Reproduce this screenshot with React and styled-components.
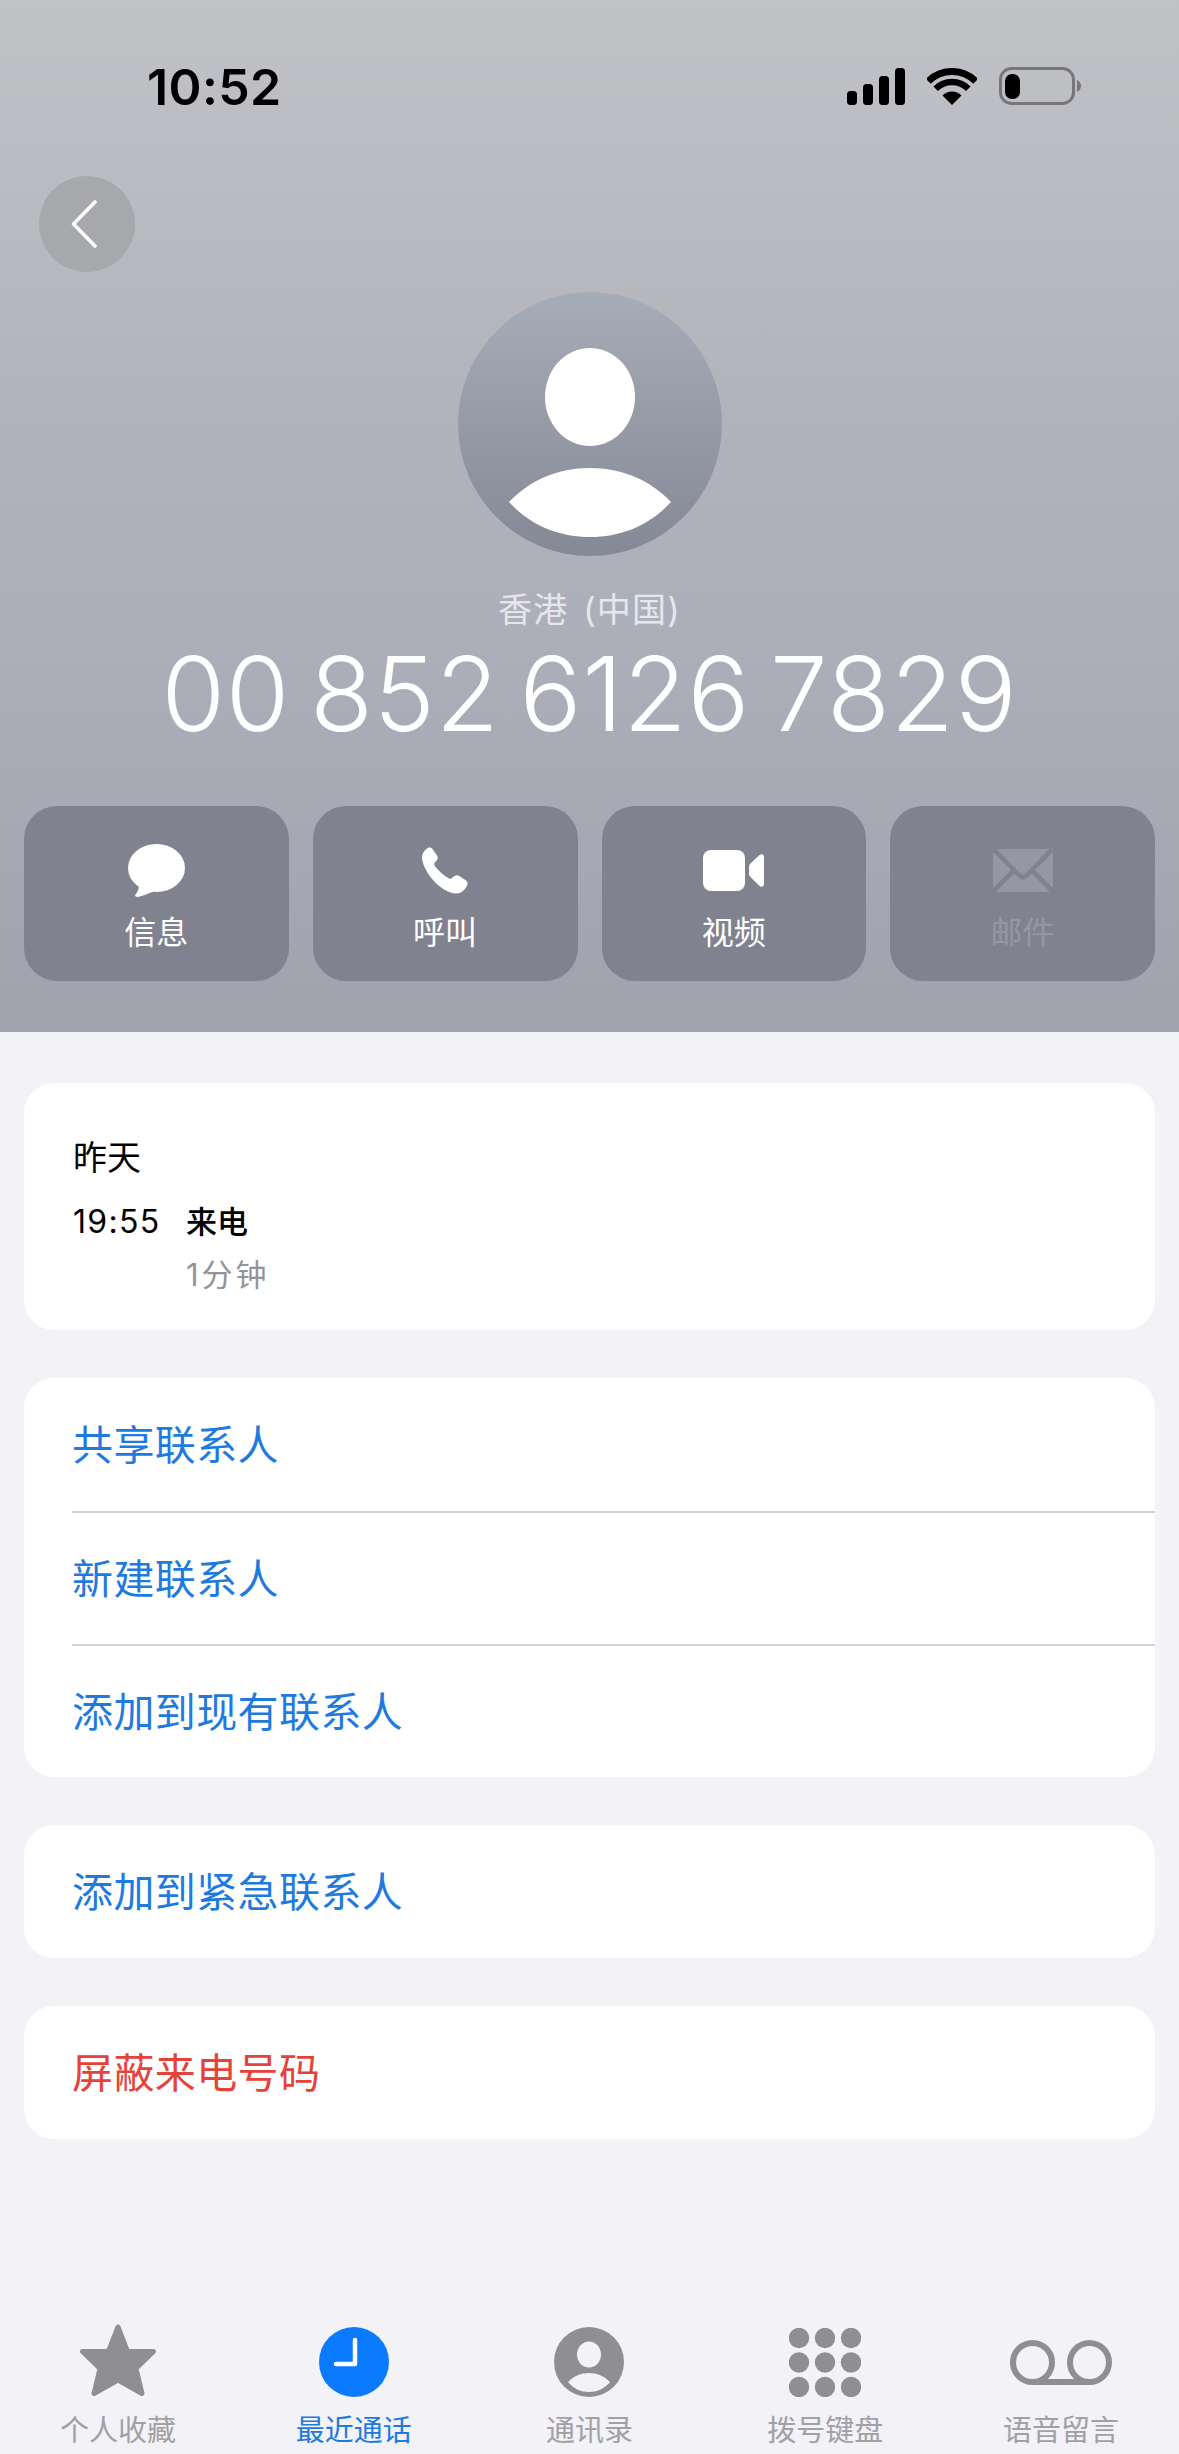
import React from "react";
import styled, { createGlobalStyle } from "styled-components";

const GlobalStyle = createGlobalStyle`
  html, body {
    margin: 0;
    padding: 0;
    background: #f2f2f7;
  }
  body {
    font-family: "Inter", "Noto Sans CJK SC", sans-serif;
    overflow: hidden;
  }
  * {
    box-sizing: border-box;
  }
`;

const CJK = `"Inter", "Noto Sans CJK SC", sans-serif`;

const Page = styled.div`
  width: 1179px;
  height: 2454px;
  display: flex;
  flex-direction: column;
  background: #f2f2f7;
  font-family: ${CJK};
`;

const Header = styled.header`
  height: 1032px;
  flex: none;
  display: flex;
  flex-direction: column;
  background: linear-gradient(
    180deg,
    #c1c2c6 0%,
    #b7b8be 28%,
    #b0b3bb 41.5%,
    #acafb9 62%,
    #a0a2ae 100%
  );
`;

const StatusBar = styled.div`
  display: flex;
  justify-content: space-between;
  align-items: center;
  height: 38px;
  margin-top: 67px;
  padding: 0 98px 0 147px;
`;

const Clock = styled.span`
  padding-top: 2px;
  font-size: 50px;
  font-weight: 600;
  line-height: 38px;
  letter-spacing: 0.4px;
  color: #000;
`;

const StatusIcons = styled.div`
  display: flex;
  align-items: center;
  gap: 22px;
`;

const BackButton = styled.div`
  width: 96px;
  height: 96px;
  margin: 71px 0 0 39px;
  padding-right: 6px;
  border-radius: 50%;
  display: flex;
  align-items: center;
  justify-content: center;
  background: #a7a8ac;
`;

const Avatar = styled.div`
  align-self: center;
  width: 264px;
  height: 264px;
  margin-top: 20px;
  border-radius: 50%;
  overflow: hidden;
  background: linear-gradient(180deg, #a7acb9 0%, #858995 100%);
`;

const Region = styled.div`
  margin-top: 34px;
  height: 40px;
  line-height: 40px;
  text-align: center;
  font-size: 34px;
  letter-spacing: 1.2px;
  word-spacing: 4px;
  color: #e6e7ea;
`;

const PhoneNumber = styled.div`
  margin-top: 14px;
  height: 100px;
  line-height: 100px;
  text-align: center;
  font-size: 103px;
  font-weight: 330;
  letter-spacing: 0.8px;
  word-spacing: -10px;
  color: #fff;
`;

const Actions = styled.div`
  display: grid;
  grid-template-columns: repeat(4, 1fr);
  gap: 24px;
  margin-top: 62px;
  padding: 0 24px;
`;

const ActionButton = styled.div`
  height: 175px;
  border-radius: 33px;
  background: #80838f;
  display: flex;
  flex-direction: column;
  align-items: center;
  color: ${(p) => (p.$disabled ? "#9597a3" : "#fff")};
`;

const ActionIcon = styled.div`
  height: 57px;
  margin-top: 36px;
  display: flex;
  align-items: center;
  justify-content: center;
`;

const ActionLabel = styled.span`
  margin-top: 14px;
  font-size: 32px;
  line-height: 40px;
`;

const Content = styled.main`
  display: flex;
  flex-direction: column;
  gap: 48px;
  padding: 51px 24px 0;
`;

const Card = styled.section`
  background: #fff;
  border-radius: 30px;
  overflow: hidden;
`;

const CallCard = styled(Card)`
  height: 247px;
  padding: 53px 49px 0;
`;

const CallDay = styled.div`
  font-size: 34px;
  line-height: 44px;
  color: #000;
`;

const CallGrid = styled.div`
  display: grid;
  grid-template-columns: 113px 1fr;
  margin-top: 20px;
`;

const CallTime = styled.div`
  font-size: 32px;
  line-height: 44px;
  letter-spacing: 1.3px;
  color: #000;
`;

const CallType = styled.div`
  font-size: 31px;
  font-weight: 500;
  line-height: 44px;
  color: #000;
`;

const CallLength = styled.div`
  grid-column: 2;
  margin-top: 9px;
  font-size: 31px;
  line-height: 44px;
  letter-spacing: 3px;
  color: #949498;
`;

const ActionRow = styled.div`
  height: 133px;
  margin-left: 48px;
  padding-bottom: 5px;
  display: flex;
  align-items: center;
  font-size: 41px;
  letter-spacing: 0.4px;
  color: ${(p) => (p.$danger ? "#e5433a" : "#1f7ae0")};

  & + & {
    border-top: 2px solid #d4d4d8;
  }
`;

const TabBar = styled.nav`
  display: grid;
  grid-template-columns: repeat(5, 1fr);
  margin-top: auto;
  padding-bottom: 5px;
`;

const Tab = styled.div`
  display: flex;
  flex-direction: column;
  align-items: center;
  color: ${(p) => (p.$active ? "#1f7ae0" : "#a0a0a5")};
`;

const TabIcon = styled.div`
  height: 76px;
  display: flex;
  align-items: center;
  justify-content: center;
`;

const TabLabel = styled.span`
  margin-top: 13px;
  font-size: 29px;
  line-height: 36px;
`;

const SignalIcon = () => (
  <svg width="58" height="37" viewBox="0 0 58 37" fill="#000">
    <rect x="0" y="23" width="10" height="14" rx="3.5" />
    <rect x="16" y="16" width="10" height="21" rx="3.5" />
    <rect x="32" y="8" width="10" height="29" rx="3.5" />
    <rect x="48" y="0" width="10" height="37" rx="3.5" />
  </svg>
);

const WifiIcon = () => (
  <svg width="50" height="37" viewBox="0 0 50 37" fill="none">
    <path d="M25 37 L15.5 27.5 A13.4 13.4 0 0 1 34.5 27.5 Z" fill="#000" />
    <path d="M8.7 20.7 A23 23 0 0 1 41.3 20.7" stroke="#000" strokeWidth="6.5" />
    <path d="M1.3 13.3 A33.5 33.5 0 0 1 48.7 13.3" stroke="#000" strokeWidth="7" />
  </svg>
);

const BatteryIcon = () => (
  <svg width="82" height="38" viewBox="0 0 82 38" fill="none">
    <rect x="1.5" y="1.5" width="73" height="35" rx="11" stroke="#77777a" strokeWidth="3" />
    <rect x="6" y="7" width="15" height="25" rx="7" fill="#000" />
    <path d="M78 13 C80.5 14 82 16.5 82 19 C82 21.5 80.5 24 78 25 Z" fill="#77777a" />
  </svg>
);

const ChevronIcon = () => (
  <svg width="26" height="48" viewBox="0 0 26 48" fill="none">
    <path
      d="M24 2 L2.5 24 L24 46"
      stroke="#fff"
      strokeWidth="3.6"
      strokeLinecap="round"
      strokeLinejoin="round"
    />
  </svg>
);

const AvatarIcon = () => (
  <svg width="264" height="264" viewBox="0 0 264 264" fill="#fff">
    <ellipse cx="132" cy="105" rx="45" ry="49" />
    <path d="M51 210 C72 188 100 176 132 176 C164 176 192 188 213 210 C192 233 164 245 132 245 C100 245 72 233 51 210 Z" />
  </svg>
);

const MessageIcon = () => (
  <svg width="57" height="53" viewBox="0 0 57 53" fill="currentColor">
    <ellipse cx="28.5" cy="24" rx="28.5" ry="24" />
    <path d="M11 40 C11 44 10 48 7.5 50.5 C6.5 52 7.5 53 9.5 53 C15 52 21 49 26 47.5 Z" />
  </svg>
);

const PhoneIcon = () => (
  <svg width="46" height="47" viewBox="0 0 46 47" fill="currentColor">
    <path d="M5 1.5 C7 0 9.5 0.5 10.5 2 L15 8.5 C16 10 16 11.5 15 13 L12.5 16 C12 16.7 12 17.5 12.5 18.3 C15 22.5 22 29 27 31.5 C28 32 29 32 29.5 31.2 L32.5 29 C34 28 35.5 27.8 37 28.8 L44 33.5 C45.8 34.8 46 36.5 45 38.5 C43 43 39 46.5 34 46.5 C27 46.5 18 41 11 33 C5 26 0 17 0 10 C0 7 2 3.5 5 1.5 Z" />
  </svg>
);

const VideoIcon = () => (
  <svg width="61" height="41" viewBox="0 0 61 41" fill="currentColor">
    <rect x="0" y="0" width="42" height="41" rx="8" />
    <path d="M47 14 L56 5.5 C58 3.5 61 4 61 7 L61 34 C61 37 58 37.5 56 35.5 L47.5 27 C46.5 26 46 25 46 24 L46 17 C46 16 46.3 15 47 14 Z" />
  </svg>
);

const MailIcon = () => (
  <svg width="60" height="43" viewBox="0 0 60 43" fill="currentColor">
    <path d="M4 0 H56 L33 24 C31 26 29 26 27 24 Z" />
    <path d="M0 3 V39 L18 21 Z" />
    <path d="M60 3 V39 L42 21 Z" />
    <path d="M3 43 H57 L39 24.5 L34 29 C32 31 28 31 26 29 L21 24.5 Z" />
  </svg>
);

const StarIcon = () => (
  <svg width="76" height="76" viewBox="0 0 76 76" fill="#8e8e93" stroke="#8e8e93" strokeWidth="5" strokeLinejoin="round">
    <polygon points="38,3 47.5,27.5 73.5,27.5 56,44.5 62,69.5 38,56 14,69.5 20,44.5 2.5,27.5 28.5,27.5" />
  </svg>
);

const RecentsIcon = () => (
  <svg width="70" height="70" viewBox="0 0 70 70" fill="none">
    <circle cx="35" cy="35" r="35" fill="#0a7aff" />
    <path
      d="M36 13 V37 H17"
      stroke="#fff"
      strokeWidth="4.5"
      strokeLinecap="round"
      strokeLinejoin="round"
    />
  </svg>
);

const ContactsIcon = () => (
  <svg width="70" height="70" viewBox="0 0 70 70">
    <circle cx="35" cy="35" r="35" fill="#8e8e93" />
    <ellipse cx="35" cy="27.5" rx="12" ry="13" fill="#f2f2f7" />
    <path
      d="M14 55 C20 49 27 46 35 46 C43 46 50 49 56 55 C50 62 43 65 35 65 C27 65 20 62 14 55 Z"
      fill="#f2f2f7"
    />
  </svg>
);

const KeypadIcon = () => (
  <svg width="72" height="69" viewBox="0 0 72 69" fill="#8e8e93">
    {[10, 34.5, 59].map((cy) =>
      [10, 36, 62].map((cx) => <circle key={`${cx}-${cy}`} cx={cx} cy={cy} r="10.2" />)
    )}
  </svg>
);

const VoicemailIcon = () => (
  <svg width="102" height="45" viewBox="0 0 102 45" fill="none" stroke="#8e8e93" strokeWidth="6">
    <circle cx="22.5" cy="22.5" r="19.5" />
    <circle cx="79.5" cy="22.5" r="19.5" />
    <path d="M22.5 42 H79.5" />
  </svg>
);

const actions = [
  { label: "信息", icon: <MessageIcon /> },
  { label: "呼叫", icon: <PhoneIcon /> },
  { label: "视频", icon: <VideoIcon /> },
  { label: "邮件", icon: <MailIcon />, disabled: true },
];

const tabs = [
  { label: "个人收藏", icon: <StarIcon /> },
  { label: "最近通话", icon: <RecentsIcon />, active: true },
  { label: "通讯录", icon: <ContactsIcon /> },
  { label: "拨号键盘", icon: <KeypadIcon /> },
  { label: "语音留言", icon: <VoicemailIcon /> },
];

const App = () => {
  return (
    <Page>
      <GlobalStyle />
      <Header>
        <StatusBar>
          <Clock>10:52</Clock>
          <StatusIcons>
            <SignalIcon />
            <WifiIcon />
            <BatteryIcon />
          </StatusIcons>
        </StatusBar>
        <BackButton>
          <ChevronIcon />
        </BackButton>
        <Avatar>
          <AvatarIcon />
        </Avatar>
        <Region>香港 (中国)</Region>
        <PhoneNumber>00 852 6126 7829</PhoneNumber>
        <Actions>
          {actions.map(({ label, icon, disabled }) => (
            <ActionButton key={label} $disabled={disabled}>
              <ActionIcon>{icon}</ActionIcon>
              <ActionLabel>{label}</ActionLabel>
            </ActionButton>
          ))}
        </Actions>
      </Header>
      <Content>
        <CallCard>
          <CallDay>昨天</CallDay>
          <CallGrid>
            <CallTime>19:55</CallTime>
            <CallType>来电</CallType>
            <CallLength>1分钟</CallLength>
          </CallGrid>
        </CallCard>
        <Card>
          <ActionRow>共享联系人</ActionRow>
          <ActionRow>新建联系人</ActionRow>
          <ActionRow>添加到现有联系人</ActionRow>
        </Card>
        <Card>
          <ActionRow>添加到紧急联系人</ActionRow>
        </Card>
        <Card>
          <ActionRow $danger>屏蔽来电号码</ActionRow>
        </Card>
      </Content>
      <TabBar>
        {tabs.map(({ label, icon, active }) => (
          <Tab key={label} $active={active}>
            <TabIcon>{icon}</TabIcon>
            <TabLabel>{label}</TabLabel>
          </Tab>
        ))}
      </TabBar>
    </Page>
  );
};

export default App;
